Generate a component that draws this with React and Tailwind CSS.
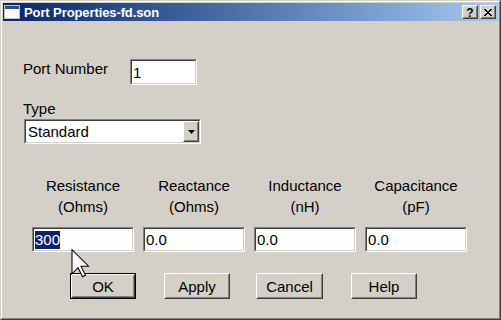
import React from "react";

const font = { fontFamily: '"Liberation Sans", Arial, sans-serif' };

function Sunken({ className, children }) {
    return (
        <div className={`border border-t-[#808080] border-l-[#808080] border-b-white border-r-white ${className}`}>
            <div className="w-full h-full border border-t-[#404040] border-l-[#404040] border-b-[#d4d0c8] border-r-[#d4d0c8] bg-white flex items-center">
                {children}
            </div>
        </div>
    );
}

function Raised({ className, children, inner = "" }) {
    return (
        <div className={`border border-t-white border-l-white border-b-[#404040] border-r-[#404040] bg-[#d4d0c8] ${className}`}>
            <div className={`w-full h-full border border-t-[#d4d0c8] border-l-[#d4d0c8] border-b-[#808080] border-r-[#808080] flex items-center justify-center ${inner}`}>
                {children}
            </div>
        </div>
    );
}

function Button({ label, isDefault, className }) {
    if (isDefault) {
        return (
            <div className={`border border-black h-[26px] ${className}`}>
                <Raised className="w-full h-full">
                    <span className="text-[15px] leading-none">{label}</span>
                </Raised>
            </div>
        );
    }
    return (
        <Raised className={`h-[26px] ${className}`}>
            <span className="text-[15px] leading-none">{label}</span>
        </Raised>
    );
}

const fields = [
    { name: "Resistance", unit: "(Ohms)", value: "300", selected: true },
    { name: "Reactance", unit: "(Ohms)", value: "0.0" },
    { name: "Inductance", unit: "(nH)", value: "0.0" },
    { name: "Capacitance", unit: "(pF)", value: "0.0" },
];

export default function App() {
    return (
        <div className="w-[501px] h-[320px] relative text-black" style={font}>
            <div className="w-full h-full flex border border-t-[#d4d0c8] border-l-[#d4d0c8] border-r-[#404040] border-b-[#404040]">
                <div className="flex-1 flex flex-col p-[1px] bg-[#d4d0c8] border border-t-white border-l-white border-r-[#808080] border-b-[#808080]">
                    {/* Title bar */}
                    <div className="h-[18px] flex items-center bg-gradient-to-r from-[#0a246a] to-[#a6caf0] pl-[1px] pr-[2px]">
                        <svg width="16" height="14" viewBox="0 0 16 14" className="shrink-0">
                            <rect x="0.5" y="0.5" width="15" height="13" fill="#fff" stroke="#c0c0c0" />
                            <rect x="1" y="1" width="14" height="3" fill="#0a246a" />
                            <rect x="1" y="1" width="14" height="3" fill="#3a6ea5" opacity="0.6" />
                        </svg>
                        <span className="ml-[4px] text-white font-bold text-[13px] leading-none tracking-[-0.1px]">
                            Port Properties-fd.son
                        </span>
                        <div className="ml-auto flex gap-[2px]">
                            <Raised className="w-[16px] h-[14px]">
                                <span className="font-bold text-[12px] leading-none mt-[1px]">?</span>
                            </Raised>
                            <Raised className="w-[16px] h-[14px]">
                                <svg width="8" height="7" viewBox="0 0 8 7">
                                    <path d="M0 0L7 7M1 0L8 7M7 0L0 7M8 0L1 7" stroke="#000" strokeWidth="1" />
                                </svg>
                            </Raised>
                        </div>
                    </div>

                    {/* Body */}
                    <div className="flex-1 flex flex-col text-[15px]">
                        <div className="mt-[38px] ml-[20px] flex items-start h-[26px]">
                            <span className="w-[107px] leading-[17px] pt-[1px]">Port Number</span>
                            <Sunken className="w-[67px] h-[26px]">
                                <span className="pl-[1px] leading-none">1</span>
                            </Sunken>
                        </div>

                        <span className="mt-[15px] ml-[20px] leading-[17px]">Type</span>
                        <Sunken className="mt-[2px] ml-[21px] w-[177px] h-[25px]">
                            <span className="pl-[2px] leading-none flex-1">Standard</span>
                            <Raised className="w-[16px] h-full">
                                <svg width="7" height="4" viewBox="0 0 7 4">
                                    <path d="M0 0H7L3.5 4Z" fill="#000" />
                                </svg>
                            </Raised>
                        </Sunken>

                        <div className="mt-[31px] ml-[29px] flex gap-[9px]">
                            {fields.map((f) => (
                                <div key={f.name} className="w-[102px] flex flex-col">
                                    <div className="flex flex-col items-center leading-[21px]">
                                        <span>{f.name}</span>
                                        <span>{f.unit}</span>
                                    </div>
                                    <Sunken className="mt-[10px] w-[102px] h-[25px]">
                                        {f.selected ? (
                                            <span className="ml-[1px] bg-[#0a246a] text-white leading-[18px] px-[0px]">{f.value}</span>
                                        ) : (
                                            <span className="pl-[1px] leading-none">{f.value}</span>
                                        )}
                                    </Sunken>
                                </div>
                            ))}
                        </div>

                        <div className="mt-[21px] ml-[67px] flex">
                            <Button label="OK" isDefault className="w-[66px]" />
                            <Button label="Apply" className="ml-[28px] w-[66px]" />
                            <Button label="Cancel" className="ml-[26px] w-[67px]" />
                            <Button label="Help" className="ml-[28px] w-[66px]" />
                        </div>
                    </div>
                </div>
            </div>

            {/* Mouse pointer */}
            <svg
                className="absolute left-[71px] top-[249px]"
                width="20"
                height="30"
                viewBox="-0.5 -0.5 13 20"
            >
                <path
                    d="M0 0L0 16L4 12L7 18L9 17L6 11L11 11Z"
                    fill="#fff"
                    stroke="#000"
                    strokeWidth="0.7"
                    strokeLinejoin="miter"
                />
            </svg>
        </div>
    );
}
